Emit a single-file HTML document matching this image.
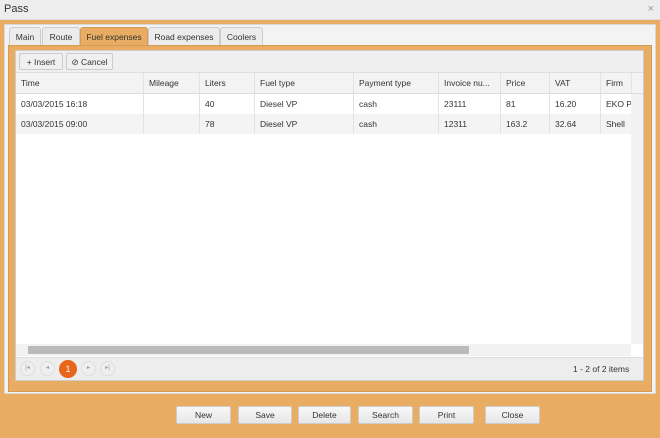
<!DOCTYPE html><html><head><style>
*{box-sizing:border-box;margin:0;padding:0}
body{width:660px;height:438px;background:#e8ad62;font-family:"Liberation Sans",sans-serif;font-size:8.5px;color:#333;position:relative;overflow:hidden}
.a{position:absolute;white-space:nowrap}
.title{left:0;top:0;width:660px;height:20px;background:#ededed;font-size:11px;padding:3px 4px;color:#333;border-bottom:1px solid #ddd}
.panel{left:4px;top:24px;width:652px;height:370px;background:#f3f3f3;border:1px solid #d8d8d8}
.tab{top:27px;height:19px;border:1px solid #ccc;border-bottom:none;background:#ececec;padding:4px 0;text-align:center;border-radius:3px 3px 0 0;overflow:hidden}
.content{left:8px;top:45px;width:644px;height:347px;background:#e8ad62;border:1px solid #d59a55}
.grid{left:15px;top:50px;width:629px;height:331px;background:#fff;border:1px solid #ccc}
.tb{left:16px;top:51px;width:627px;height:22px;background:#efefef;border-bottom:1px solid #ddd}
.btn{border:1px solid #ccc;background:#f0f0f0;border-radius:2px;height:17px;top:53px;padding:3px 0;text-align:center}
.hdr{left:16px;top:73px;width:627px;height:21px;background:#f3f3f3;border-bottom:1px solid #ddd}
.row{left:16px;width:615px;height:20px}
.c{position:absolute;top:0;height:100%;border-left:1px solid #e2e2e2;padding:5px 5px;white-space:nowrap;overflow:hidden}
.pg{left:16px;top:357px;width:627px;height:23px;background:#ededed;border-top:1px solid #ddd}
.pb{top:361px;width:15px;height:15px;border-radius:50%;border:1px solid #ddd;background:#eee;font-size:6px;color:#999;text-align:center;line-height:13px}
.bb{top:406px;height:18px;background:linear-gradient(#f8f8f8,#e6e6e6);border:1px solid #ccc;border-radius:2px;text-align:center;line-height:16px}
</style></head><body>
<div class="a title">Pass<span style="position:absolute;right:6px;top:3px;color:#999">×</span></div>
<div class="a panel"></div>
<div class="a tab" style="left:9px;width:32px">Main</div>
<div class="a tab" style="left:42px;width:38px">Route</div>
<div class="a tab" style="left:80px;width:68px;background:#e8ad62;border-color:#d59a55">Fuel expenses</div>
<div class="a tab" style="left:148px;width:72px">Road expenses</div>
<div class="a tab" style="left:220px;width:43px">Coolers</div>
<div class="a content"></div>
<div class="a grid"></div>
<div class="a tb"></div>
<div class="a btn" style="left:19px;width:44px">+ Insert</div>
<div class="a btn" style="left:66px;width:47px">⊘ Cancel</div>
<div class="a hdr"><div style="position:relative;height:100%">
<div class="c" style="left:0;width:128px;border:none">Time</div><div class="c" style="left:127px;width:56px">Mileage</div><div class="c" style="left:183px;width:55px">Liters</div><div class="c" style="left:238px;width:99px">Fuel type</div><div class="c" style="left:337px;width:85px">Payment type</div><div class="c" style="left:422px;width:62px">Invoice nu...</div><div class="c" style="left:484px;width:49px">Price</div><div class="c" style="left:533px;width:51px">VAT</div><div class="c" style="left:584px;width:31px">Firm</div><div class="c" style="left:615px;width:12px"></div></div></div>
<div class="a row" style="top:94px;background:#fff"><div class="c" style="left:0;width:128px;border:none">03/03/2015 16:18</div><div class="c" style="left:127px;width:56px"></div><div class="c" style="left:183px;width:55px">40</div><div class="c" style="left:238px;width:99px">Diesel VP</div><div class="c" style="left:337px;width:85px">cash</div><div class="c" style="left:422px;width:62px">23111</div><div class="c" style="left:484px;width:49px">81</div><div class="c" style="left:533px;width:51px">16.20</div><div class="c" style="left:584px;width:31px">EKO Pet</div></div>
<div class="a row" style="top:114px;background:#f4f4f4"><div class="c" style="left:0;width:128px;border:none">03/03/2015 09:00</div><div class="c" style="left:127px;width:56px"></div><div class="c" style="left:183px;width:55px">78</div><div class="c" style="left:238px;width:99px">Diesel VP</div><div class="c" style="left:337px;width:85px">cash</div><div class="c" style="left:422px;width:62px">12311</div><div class="c" style="left:484px;width:49px">163.2</div><div class="c" style="left:533px;width:51px">32.64</div><div class="c" style="left:584px;width:31px">Shell</div></div>
<div class="a" style="left:631px;top:94px;width:12px;height:250px;background:#f2f2f2"></div>
<div class="a" style="left:16px;top:344px;width:615px;height:12px;background:#f2f2f2"></div>
<div class="a" style="left:28px;top:346px;width:441px;height:8px;background:#bbb"></div>
<div class="a pg"></div>
<div class="a pb" style="left:20px">|◂</div><div class="a pb" style="left:40px">◂</div>
<div class="a pb" style="left:59px;background:#e8651a;border-color:#e8651a;color:#fff;font-size:9px;width:18px;height:18px;top:360px;line-height:16px">1</div>
<div class="a pb" style="left:81px">▸</div><div class="a pb" style="left:100px">▸|</div>
<div class="a" style="left:573px;top:364px">1 - 2 of 2 items</div>
<div class="a bb" style="left:176px;width:55px">New</div>
<div class="a bb" style="left:238px;width:54px">Save</div>
<div class="a bb" style="left:298px;width:53px">Delete</div>
<div class="a bb" style="left:358px;width:55px">Search</div>
<div class="a bb" style="left:419px;width:55px">Print</div>
<div class="a bb" style="left:485px;width:55px">Close</div>
</body></html>
